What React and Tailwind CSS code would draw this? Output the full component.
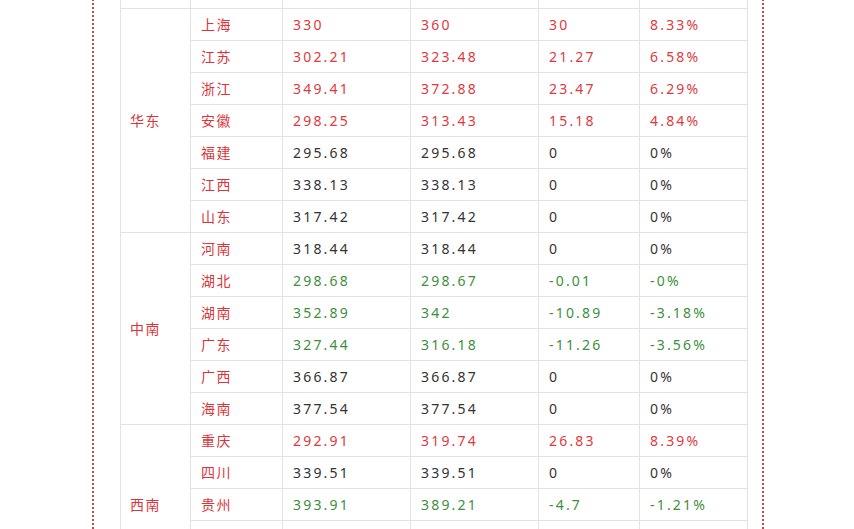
const RED = "text-[#e0393e]";
const GREEN = "text-[#3d8f3d]";
const DARK = "text-[#333]";

const groups = [
  {
    region: "",
    rows: [["", "", "", "", "", ""]],
  },
  {
    region: "华东",
    rows: [
      ["上海", "330", "360", "30", "8.33%", "up"],
      ["江苏", "302.21", "323.48", "21.27", "6.58%", "up"],
      ["浙江", "349.41", "372.88", "23.47", "6.29%", "up"],
      ["安徽", "298.25", "313.43", "15.18", "4.84%", "up"],
      ["福建", "295.68", "295.68", "0", "0%", ""],
      ["江西", "338.13", "338.13", "0", "0%", ""],
      ["山东", "317.42", "317.42", "0", "0%", ""],
    ],
  },
  {
    region: "中南",
    rows: [
      ["河南", "318.44", "318.44", "0", "0%", ""],
      ["湖北", "298.68", "298.67", "-0.01", "-0%", "down"],
      ["湖南", "352.89", "342", "-10.89", "-3.18%", "down"],
      ["广东", "327.44", "316.18", "-11.26", "-3.56%", "down"],
      ["广西", "366.87", "366.87", "0", "0%", ""],
      ["海南", "377.54", "377.54", "0", "0%", ""],
    ],
  },
  {
    region: "西南",
    rows: [
      ["重庆", "292.91", "319.74", "26.83", "8.39%", "up"],
      ["四川", "339.51", "339.51", "0", "0%", ""],
      ["贵州", "393.91", "389.21", "-4.7", "-1.21%", "down"],
      // below the fold
      ["", "", "", "", "", ""],
      ["", "", "", "", "", ""],
    ],
  },
];

const cell = "border border-[#e2e2e2] h-[32px] pl-[10px] pr-0 align-middle";

export default function App() {
  return (
    <div className="w-[854px] h-[529px] overflow-hidden bg-white" style={{ fontFamily: '"Noto Sans", "Noto Sans CJK SC", sans-serif' }}>
      <div className="ml-[92px] w-[672px] h-[560px] border-x-2 border-dotted border-[#c24a3f] -mt-[24px]">
        <table className="ml-[26px] border-collapse table-fixed w-[627px] text-[14px] tracking-[2.2px]">
          <colgroup>
            <col className="w-[70px]" />
            <col className="w-[92px]" />
            <col className="w-[128px]" />
            <col className="w-[128px]" />
            <col className="w-[101px]" />
            <col className="w-[108px]" />
          </colgroup>
          <tbody>
            {groups.map((g, gi) =>
              g.rows.map((r, ri) => {
                const tone = r[5] === "up" ? RED : r[5] === "down" ? GREEN : DARK;
                return (
                  <tr key={gi + "-" + ri}>
                    {ri === 0 && (
                      <td rowSpan={g.rows.length} className={`${cell} !pl-[9px] text-[#d9363b] tracking-[1.5px]`}>
                        {g.region}
                      </td>
                    )}
                    <td className={`${cell} text-[#d9363b] tracking-[1.5px]`}>{r[0]}</td>
                    <td className={`${cell} ${tone}`}>{r[1]}</td>
                    <td className={`${cell} ${tone}`}>{r[2]}</td>
                    <td className={`${cell} ${tone}`}>{r[3]}</td>
                    <td className={`${cell} ${tone}`}>{r[4]}</td>
                  </tr>
                );
              })
            )}
          </tbody>
        </table>
      </div>
    </div>
  );
}
